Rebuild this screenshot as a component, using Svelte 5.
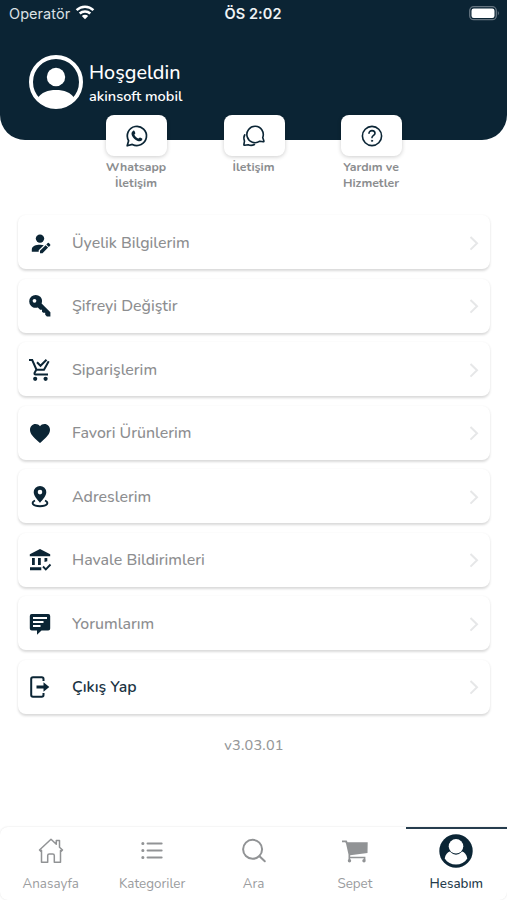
<script>
  const shortcuts = [
    { icon: 'whatsapp', lines: ['Whatsapp', 'İletişim'] },
    { icon: 'chat', lines: ['İletişim'] },
    { icon: 'help', lines: ['Yardım ve', 'Hizmetler'] }
  ];
  const rows = [
    { icon: 'user', label: 'Üyelik Bilgilerim' },
    { icon: 'key', label: 'Şifreyi Değiştir' },
    { icon: 'order', label: 'Siparişlerim' },
    { icon: 'heart', label: 'Favori Ürünlerim' },
    { icon: 'pin', label: 'Adreslerim' },
    { icon: 'bank', label: 'Havale Bildirimleri' },
    { icon: 'comment', label: 'Yorumlarım' },
    { icon: 'exit', label: 'Çıkış Yap', strong: true }
  ];
  const tabs = [
    { icon: 'home', label: 'Anasayfa' },
    { icon: 'list', label: 'Kategoriler' },
    { icon: 'search', label: 'Ara' },
    { icon: 'cart', label: 'Sepet' },
    { icon: 'account', label: 'Hesabım', active: true }
  ];
</script>

{#snippet glyph(name)}
  {#if name === 'whatsapp'}
    <svg width="24" height="24" viewBox="0 0 24 24" fill="none" stroke="currentColor" stroke-width="1.7">
      <path d="M2.2 21.8l1.4-5A9.6 9.6 0 1 1 7.3 20.400z" stroke-linejoin="round" />
      <path fill="currentColor" stroke="none" d="M8.200 6.700C9 6.300 9.300 6.600 9.500 7.100L10.300 9C10.500 9.500 9.500 10.300 9.400 10.700C10 12.500 11.700 13.900 13.500 14.600C14 14.300 14.500 13.300 15.100 13.500L17.100 14.500C17.500 14.800 17.400 15.500 16.900 16.200C16 17.400 14.300 17.500 12.700 16.900C10 16 8 14.100 6.900 11.500C6.100 9.500 6.500 7.700 8.200 6.700Z" />
    </svg>
  {:else if name === 'chat'}
    <svg width="24" height="24" viewBox="0 0 24 24" fill="none" stroke="currentColor" stroke-width="1.600" stroke-linejoin="round" stroke-linecap="round">
      <path d="M21.200 17.800L17.800 17.200A8.200 8.200 0 1 1 20.700 13.500L21.900 17.100Q22 17.900 21.200 17.800Z" />
      <path d="M2.800 10.800C1.600 12.600 1.700 15 2.500 17.200L1.900 20.500Q1.800 21.400 2.700 21.300L6.300 20.800C8.300 21.700 10.600 21.500 12.500 20.500" />
    </svg>
  {:else if name === 'help'}
    <svg width="24" height="24" viewBox="0 0 24 24" fill="none" stroke="currentColor" stroke-width="1.6" stroke-linecap="round">
      <circle cx="12" cy="12" r="9.600" />
      <path d="M9 9.300C9 5.700 15 5.800 15 9.300C15 11.300 12 11.500 12 13.600" />
      <circle cx="12" cy="16.800" r=".65" fill="currentColor" stroke-width=".8" />
    </svg>
  {:else if name === 'user'}
    <svg width="24" height="24" viewBox="0 0 24 24" fill="currentColor">
      <circle cx="12" cy="7.600" r="4.200" />
      <path d="M3.800 20.800V18.500C3.800 14.900 8 13.700 12 13.700Q14.500 13.700 15.800 14.200L10.700 19.300V20.800ZM12 22.300V19.800L17.600 14.200L20.100 16.600L14.500 22.300ZM18.300 13.500L19.800 12Q20.400 11.600 20.900 12.100L22.200 13.400Q22.700 14 22.200 14.500L20.800 15.900Z" />
    </svg>
  {:else if name === 'key'}
    <svg width="24" height="24" viewBox="0 0 24 24" fill="currentColor">
      <path fill-rule="evenodd" d="M12.300 2.800A6.500 6.500 0 0 0 3.100 12C5 13.900 7.500 14.300 9.800 13.400L12.100 15.700H14V17.700L15.200 18.800H17.200V20.700L18.900 22.400H22.400V18.200L13.600 9.500C14.400 7.200 14.100 4.600 12.300 2.800ZM6.500 4.900A1.900 1.900 0 1 1 6.500 8.700A1.900 1.900 0 1 1 6.500 4.900Z" />
    </svg>
  {:else if name === 'order'}
    <svg width="24" height="24" viewBox="0 0 24 24" fill="none" stroke="currentColor" stroke-width="2">
      <path d="M1 2H4.200L8.500 11.700H16L20.700 3.200M8.400 11.500L6.500 15Q6.300 16.500 7.500 16.500H20" />
      <path d="M9 4.300L12.500 7.800L18.500 1.800" />
      <g fill="currentColor" stroke="none"><circle cx="7.200" cy="20.800" r="2.100" /><circle cx="17.600" cy="20.800" r="2.100" /></g>
    </svg>
  {:else if name === 'heart'}
    <svg width="24" height="24" viewBox="0 0 24 24" fill="currentColor">
      <path d="M12 22L10.500 20.700C5.400 16 2 12.900 2 8.700C2 5.500 4.400 3 7.500 3C9.300 3 11 3.900 12 5.200C13 3.900 14.700 3 16.500 3C19.600 3 22 5.500 22 8.700C22 12.900 18.600 16 13.500 20.700Z" />
    </svg>
  {:else if name === 'pin'}
    <svg width="24" height="24" viewBox="0 0 24 24" fill="currentColor">
      <path fill-rule="evenodd" d="M12 1A6.300 6.300 0 0 0 5.700 7.300C5.700 11.500 12 17.700 12 17.700S18.300 11.500 18.300 7.300A6.300 6.300 0 0 0 12 1ZM12 4.800A2.300 2.300 0 1 1 12 9.400A2.300 2.300 0 1 1 12 4.800Z" />
      <path fill="none" stroke="currentColor" stroke-width="1.900" d="M7 15.500C2.500 17.500 4.500 21.200 12 21.200S21.500 17.500 17 15.500" />
    </svg>
  {:else if name === 'bank'}
    <svg width="24" height="24" viewBox="0 0 24 24" fill="currentColor">
      <path d="M12 1L22.200 6.200V8.300H1.800V6.200ZM4 10H6.800V17H4ZM10 10H12.800V17H10ZM16.500 10H19.300V13.200L16.500 14ZM2 19.200H13.300V22.300H2Z" />
      <path fill="none" stroke="currentColor" stroke-width="1.900" d="M15 18.500L17.800 21.300L22.500 16.500" />
    </svg>
  {:else if name === 'comment'}
    <svg width="24" height="24" viewBox="0 0 24 24" fill="currentColor">
      <path fill-rule="evenodd" d="M3.700 2H20.300Q22.200 2 22.200 4V16.500Q22.200 18.500 20.200 18.500H13.500L9 22.700V18.500H3.800Q1.800 18.500 1.800 16.500V4Q1.800 2 3.700 2ZM5 5V6.900H19V5ZM5 9V10.900H15.500V9ZM5 13V14.900H12.500V13Z" />
    </svg>
  {:else if name === 'exit'}
    <svg width="24" height="24" viewBox="0 0 24 24" fill="none" stroke="currentColor" stroke-width="2">
      <path d="M15.500 6V4Q15.500 2.300 13.800 2.300H5Q3.200 2.300 3.200 4V20Q3.200 21.700 5 21.700H13.800Q15.500 21.700 15.500 20V18" />
      <path d="M8.500 10.400H15.500V7.200L21.300 12L15.500 16.800V13.600H8.500Z" fill="currentColor" stroke="none" />
    </svg>
  {:else if name === 'home'}
    <svg width="26" height="26" viewBox="0 0 26 26" fill="none" stroke="currentColor" stroke-width="1.500" stroke-linejoin="round">
      <path d="M13 1.300L1.500 12L2.700 13.100L3.500 12.400V24.300H9.700V17.600Q9.700 16 11.300 16H14.700Q16.300 16 16.300 17.600V24.300H22.500V12.400L23.300 13.100L24.500 12L21.500 9.200V2.600H18.300V6.200Z" />
    </svg>
  {:else if name === 'list'}
    <svg width="24" height="24" viewBox="0 0 24 24" fill="none" stroke="currentColor" stroke-width="2.100" stroke-linecap="round">
      <path d="M7.600 4.500H21.600M7.600 11.500H21.600M7.600 18.500H21.600" />
      <path stroke-width="3" d="M2.800 4.500H2.900M2.800 11.500H2.900M2.800 18.500H2.900" />
    </svg>
  {:else if name === 'search'}
    <svg width="26" height="26" viewBox="0 0 26 26" fill="none" stroke="currentColor" stroke-width="2" stroke-linecap="round">
      <circle cx="11.600" cy="11.300" r="9.500" /><path d="M18.500 18.200L23.800 23.300" />
    </svg>
  {:else if name === 'cart'}
    <svg width="28" height="26" viewBox="0 0 28 26" fill="currentColor">
      <path d="M1 2.500H5.700L6.600 4.300H26.700L26.500 15L9.200 17.200V18.800H24.400V22H22.700V20.300H9.200V22H7.500V16.500L5 5.500L4.300 4.200H1Z" />
      <circle cx="8.500" cy="22.800" r="1.700" /><circle cx="23" cy="22.800" r="1.700" />
    </svg>
  {:else}
    <svg width="34" height="34" viewBox="0 0 34 34">
      <circle cx="17" cy="17" r="16.700" fill="currentColor" />
      <circle cx="17" cy="12.300" r="7.300" fill="#fff" />
      <path fill="#fff" d="M5.700 24.500C6.300 20.500 8.700 18.200 10.800 17.600Q17 24 23.200 17.600C25.300 18.200 27.700 20.500 28.300 24.500C25.700 28.500 21.700 30.500 17 30.500S8.300 28.500 5.700 24.500Z" />
    </svg>
  {/if}
{/snippet}

<div class="screen">
  <header>
    <div class="status">
      <div class="carrier">
        <span>Operatör</span>
        <svg width="20" height="15" viewBox="0 0 20 15" fill="none" stroke="#fff" stroke-width="2.500">
          <path d="M1.600 5.100A12 12 0 0 1 18.400 5.100M4.700 8.500A7.700 7.700 0 0 1 15.300 8.500" />
          <path d="M10 14.300L6.800 11A4.500 4.500 0 0 1 13.200 11Z" fill="#fff" stroke="none" />
        </svg>
      </div>
      <div class="time">ÖS 2:02</div>
      <div class="battery">
        <svg width="31" height="15" viewBox="0 0 31 15">
          <rect x=".7" y=".7" width="26.600" height="13" rx="4" fill="none" stroke="#657480" stroke-width="1.300" />
          <rect x="2.500" y="2.500" width="23" height="9.400" rx="2.200" fill="#fff" />
          <path d="M28.800 5Q31 7.200 28.800 9.400Z" fill="#657480" />
        </svg>
      </div>
    </div>
    <div class="welcome">
      <svg width="54" height="54" viewBox="0 0 54 54">
        <circle cx="27" cy="27" r="25" fill="none" stroke="#fff" stroke-width="4" />
        <circle cx="27" cy="22" r="9.200" fill="#fff" />
        <path fill="#fff" d="M9 43C12 37.500 19 35 27 35S42 37.500 45 43C40 50 34 52 27 52S14 50 9 43Z" />
      </svg>
      <div class="names"><span class="hello">Hoşgeldin</span><span class="who">akinsoft mobil</span></div>
    </div>
  </header>

  <div class="shortcuts">
    {#each shortcuts as s}
      <div class="shortcut">
        <div class="tile">{@render glyph(s.icon)}</div>
        {#each s.lines as text}
          <span>{text}</span>
        {/each}
      </div>
    {/each}
  </div>

  <main>
    {#each rows as r}
      <div class="card" class:strong={r.strong}>
        <div class="icon">{@render glyph(r.icon)}</div>
        <span>{r.label}</span>
        <svg class="chevron" width="10" height="16" viewBox="0 0 10 16" fill="none" stroke="#e6e7e8" stroke-width="2"><path d="M1.500 2L8 8.300L1.500 14.600" /></svg>
      </div>
    {/each}
    <div class="version">v3.03.01</div>
  </main>

  <nav>
    {#each tabs as t}
      <div class="tab" class:active={t.active}>
        <div class="tabicon">{@render glyph(t.icon)}</div>
        <span>{t.label}</span>
      </div>
    {/each}
  </nav>
</div>

<style>
  :global(body) { background: #fff; }
  .screen {
    box-sizing: border-box;
    height: 900px;
    display: flex;
    flex-direction: column;
    overflow: hidden;
    background: #fff;
    color: #0b2535;
    font-family: Nunito, Lato, "Noto Sans", sans-serif;
  }
  svg { display: block; flex: none; }
  header {
    flex: none;
    height: 140px;
    background: #0b2434;
    border-radius: 0 0 25px 25px;
    color: #fff;
  }
  .status {
    height: 28px;
    display: grid;
    grid-template-columns: 1fr auto 1fr;
    align-items: center;
    padding: 0 7px 0 9px;
    font: 14.500px/28px Inter, "Liberation Sans", sans-serif;
  }
  .carrier { display: flex; align-items: center; gap: 5px; color: #dbe1e5; }
  .carrier span { letter-spacing: .05px; }
  .carrier svg { margin-top: -3px; }
  .time { font-weight: 600; color: #eff3f5; padding-right: 3px; letter-spacing: .1px; }
  .battery { justify-self: end; margin-top: -2px; }
  .welcome { display: flex; gap: 6px; padding: 27px 0 0 29px; }
  .names { display: flex; flex-direction: column; padding-top: 6px; }
  .hello { font-size: 19.800px; line-height: 23px; font-weight: 500; }
  .who { font-size: 14.500px; line-height: 24px; font-weight: 600; }
  .shortcuts {
    height: 100px;
    flex: none;
    display: flex;
    justify-content: center;
    gap: 17px;
    margin-top: -25px;
  }
  .shortcut {
    width: 100.500px;
    display: flex;
    flex-direction: column;
    align-items: center;
    font-size: 12.300px;
    line-height: 16px;
    font-weight: 700;
    color: #8b8d8f;
  }
  .tile {
    width: 61px;
    height: 41px;
    margin-bottom: 3px;
    display: flex;
    align-items: center;
    justify-content: center;
    background: #fff;
    border-radius: 8px;
    color: #0b2535;
    box-shadow: 0 1px 4px #0003;
  }
  .tile { margin-left: 1px; }
  main { flex: 1; display: flex; flex-direction: column; gap: 9.500px; padding: 0 17px 0 18px; }
  .card {
    flex: none;
    box-sizing: border-box;
    height: 54px;
    display: flex;
    align-items: center;
    padding: 1px 11px 0 10px;
    background: #fff;
    border-radius: 8px;
    box-shadow: 0 1.500px 2.500px #00000026;
    font-size: 15.900px;
    font-weight: 500;
    color: #8d8e90;
  }
  .icon { width: 44px; color: #0b2535; }
  .card span { flex: 1; }
  .card.strong { color: #1b3343; font-weight: 600; font-size: 15.800px; }
  .version { text-align: center; font-size: 14.500px; line-height: 20px; padding-top: 12px; font-weight: 500; letter-spacing: .2px; color: #969899; }
  nav {
    flex: none;
    height: 73px;
    display: flex;
    border-radius: 8px 0 8px 8px;
    box-shadow: 0 0 2px #0002;
  }
  .tab {
    flex: 1;
    box-sizing: border-box;
    display: flex;
    flex-direction: column;
    align-items: center;
    border-top: 2px solid transparent;
    font-size: 13.400px;
    line-height: 22px;
    color: #9a9c9e;
  }
  .tabicon { height: 44px; display: flex; align-items: center; color: #919395; }
  .tab.active { border-color: #263d4e; color: #243b4b; font-weight: 500; }
  .active .tabicon { color: #0b2535; }
</style>
